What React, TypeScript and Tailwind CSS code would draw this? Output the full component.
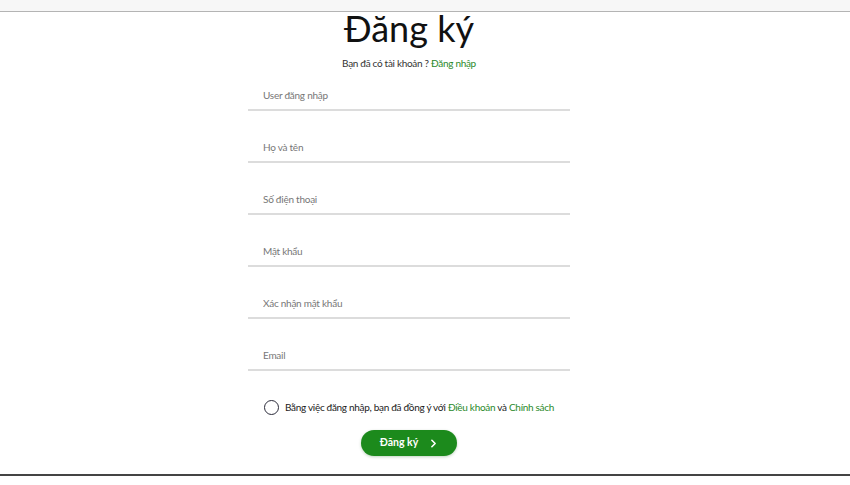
import { ChevronRight } from 'lucide-react';

const fields = ['User đăng nhập', 'Họ và tên', 'Số điện thoại', 'Mật khẩu', 'Xác nhận mật khẩu', 'Email'];

export default function App() {
  return (
    <div className="h-[485px] w-full flex flex-col bg-white overflow-hidden" style={{ fontFamily: 'Lato, "Open Sans", sans-serif' }}>
      <div className="h-[12px] bg-[#f7f7f7] border-b border-[#b4b4b4] shrink-0" />

      <main className="flex-1 flex flex-col items-center pr-[32px]">
        <h1 className="text-[36px] leading-[32px] text-[#111] font-normal">Đăng ký</h1>
        <p className="mt-[11px] text-[10px] tracking-[-0.3px] leading-[16px] text-[#333]">
          Bạn đã có tài khoản ? <a href="#" className="text-[#2a8a2a]">Đăng nhập</a>
        </p>

        <form className="w-[322px] mt-[10px] flex flex-col gap-[22px]">
          {fields.map((f) => (
            <input
              key={f}
              type={f.startsWith('Mật') || f.startsWith('Xác') ? 'password' : 'text'}
              placeholder={f}
              className="h-[30px] w-full border-b-2 border-[#dcdcdc] px-[15px] text-[10px] tracking-[-0.25px] text-[#333] placeholder:text-[#777] outline-none"
            />
          ))}
        </form>

        <label className="mt-[29px] flex items-center gap-[6px] text-[10px] tracking-[-0.3px] text-[#222]">
          <span className="w-[15px] h-[15px] rounded-full border-[1.5px] border-[#2b2b3a]" />
          <span>
            Bằng việc đăng nhập, bạn đã đồng ý với <a href="#" className="text-[#2a8a2a]">Điều khoản</a> và{' '}
            <a href="#" className="text-[#2a8a2a]">Chính sách</a>
          </span>
        </label>

        <button className="mt-[15px] h-[26px] w-[96px] rounded-full bg-[#1c8a1c] text-white text-[10.5px] font-bold flex items-center justify-center gap-[9px] pl-[2px] shadow-[0_1px_3px_rgba(0,80,0,0.25)]">
          Đăng ký
          <ChevronRight className="w-[13px] h-[13px]" strokeWidth={3} />
        </button>
      </main>

      <div className="h-[11px] border-t-2 border-[#444] shrink-0" />
    </div>
  );
}
